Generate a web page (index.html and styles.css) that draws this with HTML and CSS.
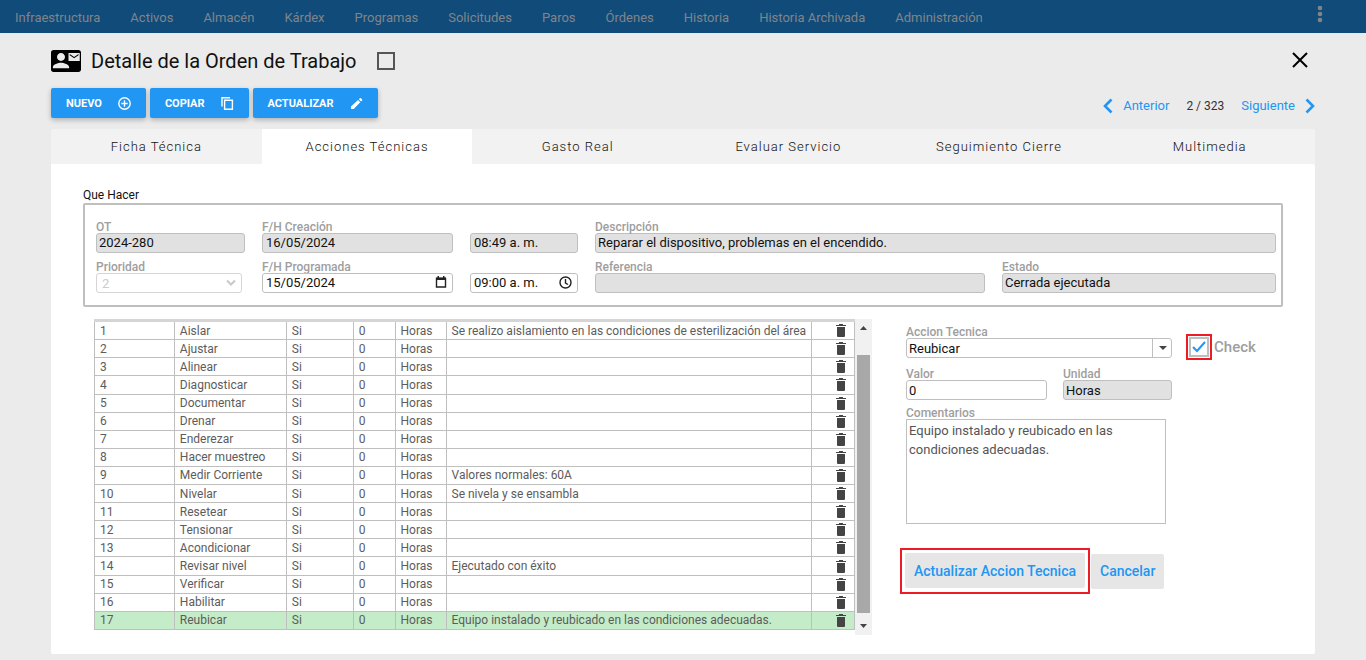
FILE: index.html
```html
<!DOCTYPE html>
<html lang="es">
<head>
    <meta charset="UTF-8">
    <meta name="viewport" content="width=device-width, initial-scale=1.0">
    <title>Detalle de la Orden de Trabajo</title>
    <link rel="stylesheet" href="styles.css">
</head>
<body>
    <svg class="sprite" aria-hidden="true">
        <symbol id="trash" viewBox="0 0 10 13">
            <path d="M0 1h3V0h4v1h3v1H0zM1 3h8v9q0 1-1 1H2q-1 0-1-1z"/>
        </symbol>
    </svg>

    <nav class="navbar">
        <a href="#">Infraestructura</a>
        <a href="#">Activos</a>
        <a href="#">Almacén</a>
        <a href="#">Kárdex</a>
        <a href="#">Programas</a>
        <a href="#">Solicitudes</a>
        <a href="#">Paros</a>
        <a href="#">Órdenes</a>
        <a href="#">Historia</a>
        <a href="#">Historia Archivada</a>
        <a href="#">Administración</a>
        <button class="menu" aria-label="Menú">
            <svg width="6" height="18" viewBox="0 0 6 18"><circle cx="3" cy="3" r="2.3"/><circle cx="3" cy="9" r="2.3"/><circle cx="3" cy="15" r="2.3"/></svg>
        </button>
    </nav>

    <main class="page">
        <header class="header">
            <svg width="30" height="22" viewBox="0 3 24 18" preserveAspectRatio="none"><path d="M22 3H2C.9 3 0 3.9 0 5v14c0 1.100.9 2 2 2h20c1.100 0 2-.9 2-2V5c0-1.100-.9-2-2-2zM8 5.500c1.800 0 3.200 1.500 3.200 3.300S9.800 12 8 12s-3.200-1.400-3.200-3.200S6.200 5.500 8 5.500zM14.500 18h-13v-1c0-2.200 4.300-3.600 6.500-3.600s6.500 1.400 6.500 3.600zM23 12h-9V5.500h9zM15 6.300v1l3.500 2.400L22 7.300v-1l-3.500 2.400z"/></svg>
            <h1>Detalle de la Orden de Trabajo</h1>
            <input type="checkbox" class="title-check" aria-label="Seleccionar orden">
            <button class="close" aria-label="Cerrar">
                <svg width="18" height="18" viewBox="0 0 18 18"><path d="M2 2l14 14M16 2L2 16"/></svg>
            </button>
        </header>

        <div class="toolbar">
            <button class="btn">NUEVO
                <svg width="13" height="13" viewBox="0 0 13 13"><circle cx="6.5" cy="6.5" r="5.7"/><path d="M6.5 3.3v6.4M3.3 6.5h6.4"/></svg>
            </button>
            <button class="btn">COPIAR
                <svg width="13" height="13" viewBox="0 0 13 13"><path d="M1 9.5V.8h8M3.6 3.2h7.8v9H3.6z"/></svg>
            </button>
            <button class="btn">ACTUALIZAR
                <svg width="13" height="13" viewBox="0 0 13 13"><path class="solid" d="M1 9.600L8 3l2.300 2.300L3.700 12H1zM8.800 2.300l1.100-1q.5-.5 1 0l1.200 1.200q.5.5 0 1l-1 1.100z"/></svg>
            </button>
            <div class="pager">
                <a href="#" class="prev">
                    <svg width="10" height="16" viewBox="0 0 10 16"><path d="M8.500 1.500L2 8l6.500 6.500"/></svg>
                    Anterior
                </a>
                <span>2 / 323</span>
                <a href="#" class="next">
                    Siguiente
                    <svg width="10" height="16" viewBox="0 0 10 16"><path d="M1.500 1.500L8 8l-6.500 6.500"/></svg>
                </a>
            </div>
        </div>

        <div class="tabs">
            <button>Ficha Técnica</button>
            <button class="active">Acciones Técnicas</button>
            <button>Gasto Real</button>
            <button>Evaluar Servicio</button>
            <button>Seguimiento Cierre</button>
            <button>Multimedia</button>
        </div>

        <section class="panel">
            <h2>Que Hacer</h2>
            <div class="order">
                <div class="field">
                    <label for="ot">OT</label>
                    <input id="ot" type="text" value="2024-280" readonly>
                </div>
                <div class="field">
                    <label for="creada">F/H Creación</label>
                    <input id="creada" class="wide-pad" type="text" value="16/05/2024" readonly>
                </div>
                <div class="field">
                    <input class="wide-pad" type="text" value="08:49 a. m." aria-label="Hora de creación" readonly>
                </div>
                <div class="field span2">
                    <label for="desc">Descripción</label>
                    <input id="desc" type="text" value="Reparar el dispositivo, problemas en el encendido." readonly>
                </div>
                <div class="field">
                    <label for="prioridad">Prioridad</label>
                    <div class="control priority">
                        <select id="prioridad" disabled><option>2</option></select>
                        <svg class="icon" width="10" height="8" viewBox="0 0 10 8"><path d="M1 1.500l4 4 4-4"/></svg>
                    </div>
                </div>
                <div class="field">
                    <label for="programada">F/H Programada</label>
                    <div class="control">
                        <input id="programada" class="wide-pad" type="text" value="15/05/2024">
                        <svg class="icon dark" width="12" height="12" viewBox="0 0 12 12"><path d="M1.500 2.500h9v8.500h-9z"/><path class="solid" d="M1 1.500h10V4H1zM2.500 0H4v2H2.500zM8 0h1.500v2H8z"/></svg>
                    </div>
                </div>
                <div class="field">
                    <div class="control">
                        <input class="wide-pad" type="text" value="09:00 a. m." aria-label="Hora programada">
                        <svg class="icon dark" width="13" height="13" viewBox="0 0 13 13"><circle cx="6.500" cy="6.500" r="5.500"/><path d="M6.500 3v4L9 8.500"/></svg>
                    </div>
                </div>
                <div class="field">
                    <label for="ref">Referencia</label>
                    <input id="ref" type="text" value="" readonly>
                </div>
                <div class="field">
                    <label for="estado">Estado</label>
                    <input id="estado" type="text" value="Cerrada ejecutada" readonly>
                </div>
            </div>

            <div class="content">
                <div class="grid-box">
                    <table class="actions">
                        <colgroup>
                            <col class="c-num"><col class="c-name"><col class="c-si"><col class="c-val"><col class="c-unit"><col><col class="c-del">
                        </colgroup>
                        <tbody>
                            <tr><td>1</td><td>Aislar</td><td>Si</td><td>0</td><td>Horas</td><td>Se realizo aislamiento en las condiciones de esterilización del área</td><td><button aria-label="Eliminar"><svg><use href="#trash"/></svg></button></td></tr>
                            <tr><td>2</td><td>Ajustar</td><td>Si</td><td>0</td><td>Horas</td><td></td><td><button aria-label="Eliminar"><svg><use href="#trash"/></svg></button></td></tr>
                            <tr><td>3</td><td>Alinear</td><td>Si</td><td>0</td><td>Horas</td><td></td><td><button aria-label="Eliminar"><svg><use href="#trash"/></svg></button></td></tr>
                            <tr><td>4</td><td>Diagnosticar</td><td>Si</td><td>0</td><td>Horas</td><td></td><td><button aria-label="Eliminar"><svg><use href="#trash"/></svg></button></td></tr>
                            <tr><td>5</td><td>Documentar</td><td>Si</td><td>0</td><td>Horas</td><td></td><td><button aria-label="Eliminar"><svg><use href="#trash"/></svg></button></td></tr>
                            <tr><td>6</td><td>Drenar</td><td>Si</td><td>0</td><td>Horas</td><td></td><td><button aria-label="Eliminar"><svg><use href="#trash"/></svg></button></td></tr>
                            <tr><td>7</td><td>Enderezar</td><td>Si</td><td>0</td><td>Horas</td><td></td><td><button aria-label="Eliminar"><svg><use href="#trash"/></svg></button></td></tr>
                            <tr><td>8</td><td>Hacer muestreo</td><td>Si</td><td>0</td><td>Horas</td><td></td><td><button aria-label="Eliminar"><svg><use href="#trash"/></svg></button></td></tr>
                            <tr><td>9</td><td>Medir Corriente</td><td>Si</td><td>0</td><td>Horas</td><td>Valores normales: 60A</td><td><button aria-label="Eliminar"><svg><use href="#trash"/></svg></button></td></tr>
                            <tr><td>10</td><td>Nivelar</td><td>Si</td><td>0</td><td>Horas</td><td>Se nivela y se ensambla</td><td><button aria-label="Eliminar"><svg><use href="#trash"/></svg></button></td></tr>
                            <tr><td>11</td><td>Resetear</td><td>Si</td><td>0</td><td>Horas</td><td></td><td><button aria-label="Eliminar"><svg><use href="#trash"/></svg></button></td></tr>
                            <tr><td>12</td><td>Tensionar</td><td>Si</td><td>0</td><td>Horas</td><td></td><td><button aria-label="Eliminar"><svg><use href="#trash"/></svg></button></td></tr>
                            <tr><td>13</td><td>Acondicionar</td><td>Si</td><td>0</td><td>Horas</td><td></td><td><button aria-label="Eliminar"><svg><use href="#trash"/></svg></button></td></tr>
                            <tr><td>14</td><td>Revisar nivel</td><td>Si</td><td>0</td><td>Horas</td><td>Ejecutado con éxito</td><td><button aria-label="Eliminar"><svg><use href="#trash"/></svg></button></td></tr>
                            <tr><td>15</td><td>Verificar</td><td>Si</td><td>0</td><td>Horas</td><td></td><td><button aria-label="Eliminar"><svg><use href="#trash"/></svg></button></td></tr>
                            <tr><td>16</td><td>Habilitar</td><td>Si</td><td>0</td><td>Horas</td><td></td><td><button aria-label="Eliminar"><svg><use href="#trash"/></svg></button></td></tr>
                            <tr class="selected"><td>17</td><td>Reubicar</td><td>Si</td><td>0</td><td>Horas</td><td>Equipo instalado y reubicado en las condiciones adecuadas.</td><td><button aria-label="Eliminar"><svg><use href="#trash"/></svg></button></td></tr>
                        </tbody>
                    </table>
                    <div class="scrollbar">
                        <svg width="7" height="4" viewBox="0 0 7 4"><path d="M0 4l3.500-4L7 4z"/></svg>
                        <div class="thumb"></div>
                        <svg width="7" height="4" viewBox="0 0 7 4"><path d="M0 0l3.500 4L7 0z"/></svg>
                    </div>
                </div>

                <form class="action-form">
                    <div class="row">
                        <div class="field action">
                            <label for="accion">Accion Tecnica</label>
                            <div class="control combo">
                                <select id="accion"><option>Reubicar</option></select>
                                <span class="arrow"><svg width="8" height="4" viewBox="0 0 8 4"><path d="M0 0h8L4 4z"/></svg></span>
                            </div>
                        </div>
                        <div class="check">
                            <span class="mark"><input id="check" type="checkbox" checked></span>
                            <label for="check">Check</label>
                        </div>
                    </div>
                    <div class="row">
                        <div class="field value">
                            <label for="valor">Valor</label>
                            <input id="valor" type="text" value="0">
                        </div>
                        <div class="field unit">
                            <label for="unidad">Unidad</label>
                            <input id="unidad" type="text" value="Horas" readonly>
                        </div>
                    </div>
                    <div class="field comments">
                        <label for="comentarios">Comentarios</label>
                        <textarea id="comentarios">Equipo instalado y reubicado en las condiciones adecuadas.</textarea>
                    </div>
                    <div class="buttons">
                        <span class="mark"><button type="button">Actualizar Accion Tecnica</button></span>
                        <button type="button">Cancelar</button>
                    </div>
                </form>
            </div>
        </section>
    </main>
</body>
</html>
```
FILE: styles.css
```css
* {
    box-sizing: border-box;
}

body {
    margin: 0;
    background-color: #ebebeb;
    font-family: Roboto, "Liberation Sans", sans-serif;
    color: #111;
}

button, input, select, textarea {
    font-family: inherit;
    margin: 0;
}

button {
    border: none;
    background: none;
    padding: 0;
    cursor: pointer;
}

a {
    text-decoration: none;
}

svg {
    display: block;
}

.sprite {
    display: none;
}

/* top menu */
.navbar {
    display: flex;
    align-items: center;
    gap: 30px;
    height: 33px;
    padding: 2px 43px 0 15px;
    background-color: #114b79;
}

.navbar a {
    color: #808589;
    font-size: 13px;
    font-weight: 400;
}

.navbar .menu {
    margin-left: auto;
    padding-bottom: 8px;
}

.navbar .menu svg {
    fill: #808589;
}

/* header */
.page {
    padding: 16px 51px 6px;
}

.header {
    display: flex;
    align-items: center;
    height: 24px;
}

.header h1 {
    margin: 0 21px 0 10px;
    font-size: 20px;
    font-weight: 400;
}

.title-check {
    appearance: none;
    width: 18px;
    height: 18px;
    border: 2px solid #555;
}

.close {
    margin: 0 6px 2px auto;
}

.close svg {
    fill: none;
    stroke: #000;
    stroke-width: 2;
}

.toolbar {
    display: flex;
    align-items: center;
    gap: 4px;
    margin: 15px 0 11px;
}

.btn {
    display: flex;
    align-items: center;
    gap: 16px;
    height: 30px;
    padding: 0 15px;
    border-radius: 2px;
    background-color: #2196f3;
    color: #fff;
    font-size: 11px;
    font-weight: 700;
    box-shadow: 0 2px 5px rgba(0, 0, 0, 0.25);
}

.btn svg {
    fill: none;
    stroke: #fff;
    stroke-width: 1.4;
}

.btn .solid {
    fill: #fff;
    stroke: none;
}

.pager {
    display: flex;
    align-items: center;
    gap: 17px;
    margin-left: auto;
    padding-top: 5px;
    color: #333;
    font-size: 12px;
}

.pager a {
    display: flex;
    align-items: center;
    gap: 10px;
    color: #2196f3;
    font-size: 13px;
}

.pager svg {
    fill: none;
    stroke: #2196f3;
    stroke-width: 2.6;
}

/* tabs */
.tabs {
    display: flex;
    background-color: #f2f2f2;
    border-radius: 2px 2px 0 0;
}

.tabs button {
    flex: 1 1 0;
    height: 35px;
    color: #111;
    font-size: 13px;
    font-weight: 300;
    letter-spacing: 1px;
}

.tabs .active {
    background-color: #fff;
}

.panel {
    padding: 24px 32px 19px;
    background-color: #fff;
    border-radius: 0 2px 2px 2px;
}

.panel h2 {
    margin: 0;
    font-size: 12px;
    font-weight: 400;
    line-height: 15px;
}

/* fields */
.order {
    display: grid;
    grid-template-columns: 149px 191px 108px 390fr 274fr;
    gap: 7px 17px;
    align-items: end;
    padding: 15px 5px 12px 11px;
    border: 2px solid #bfbfbf;
    border-radius: 2px;
}

.span2 {
    grid-column: span 2;
}

.field label {
    display: block;
    padding-top: 2px;
    color: #9e9e9e;
    font-size: 12px;
    font-weight: 500;
    line-height: 11px;
}

.field input,
.field select {
    display: block;
    width: 100%;
    height: 20px;
    padding: 0 2px;
    border: 1px solid #bfbfbf;
    border-radius: 3px;
    background-color: #fff;
    color: #111;
    font-size: 13px;
}

.field input[readonly] {
    background-color: #e1e1e1;
}

.order .field input {
    padding-bottom: 2px;
}

.field .wide-pad {
    padding: 0 3px;
}

.field select {
    appearance: none;
}

.control {
    position: relative;
}

.control .icon {
    position: absolute;
    right: 6px;
    top: 3px;
    fill: none;
    stroke: #c8c8c8;
    stroke-width: 2;
    pointer-events: none;
}

.control .dark {
    stroke: #222;
    stroke-width: 1.4;
}

.control .solid {
    fill: #222;
    stroke: none;
}

.priority {
    width: 146px;
}

.priority select {
    padding: 0 5px;
    border-color: #d5d5d5;
    color: #ccc;
    opacity: 1;
}

.priority .icon {
    top: 6px;
}

/* actions grid */
.content {
    display: flex;
    justify-content: space-between;
    padding: 12px 26px 0 11px;
}

.grid-box {
    display: flex;
    align-items: flex-start;
    width: 778px;
}

.actions {
    flex: 1;
    height: 311px;
    border-collapse: collapse;
    table-layout: fixed;
    border-top: 3px solid #d5d5d5;
    color: #5c5c5c;
    font-size: 12px;
}

.c-num { width: 80px; }
.c-name { width: 112px; }
.c-si { width: 67px; }
.c-val { width: 42px; }
.c-unit { width: 51px; }
.c-del { width: 43px; }

.actions td {
    padding: 0 5px;
    border: 1px solid #bfbfbf;
    line-height: 16px;
    white-space: nowrap;
}

.actions tr:first-child td {
    border-top: none;
}

.actions button {
    display: block;
    margin-left: auto;
    padding-right: 3px;
}

.actions svg {
    width: 10px;
    height: 13px;
    fill: #444;
}

.selected {
    background-color: #c5ecc8;
}

.scrollbar {
    display: flex;
    flex-direction: column;
    align-items: center;
    gap: 25px;
    width: 17px;
    height: 316px;
    padding: 7px 2px;
    background-color: #f1f1f1;
}

.scrollbar svg {
    fill: #444;
}

.thumb {
    flex: 1;
    width: 13px;
    margin-bottom: -14px;
    background-color: #a8a8a8;
}

/* action form */
.action-form {
    display: flex;
    flex-direction: column;
    width: 351px;
    padding-top: 6px;
}

.row {
    display: flex;
    gap: 16px;
    margin-bottom: 9px;
}

.action {
    width: 266px;
}

.combo .arrow {
    position: absolute;
    top: 0;
    right: 0;
    display: flex;
    align-items: center;
    justify-content: center;
    width: 20px;
    height: 20px;
    border-left: 1px solid #bfbfbf;
    pointer-events: none;
}

.combo svg {
    fill: #444;
}

.check {
    display: flex;
    align-items: center;
    gap: 2px;
    margin-left: -2px;
    padding-top: 10px;
    height: 33px;
}

.check label {
    color: #9e9e9e;
    font-size: 15px;
    font-weight: 500;
}

.check .mark {
    padding: 1px;
}

.check input {
    appearance: none;
    display: block;
    width: 20px;
    height: 20px;
    border: 2px solid #bfbfbf;
    background: url("data:image/svg+xml,%3Csvg xmlns='http://www.w3.org/2000/svg' viewBox='0 0 16 16'%3E%3Cpath d='M2 8l4 4 8-9' fill='none' stroke='%232196f3' stroke-width='2'/%3E%3C/svg%3E") center / 16px no-repeat;
}

.mark {
    border: 2px solid #ed1c24;
}

.value {
    width: 141px;
}

.unit {
    width: 109px;
}

.comments {
    width: 260px;
    margin-top: -3px;
}

.comments textarea {
    display: block;
    width: 100%;
    height: 105px;
    padding: 1px 2px;
    border: 1px solid #bfbfbf;
    color: #555;
    font-size: 13px;
    line-height: 19px;
    resize: none;
}

.buttons {
    display: flex;
    align-items: center;
    gap: 1px;
    margin: 24px 0 0 -6px;
}

.buttons .mark {
    padding: 3px 3px 4px;
}

.buttons button {
    display: block;
    height: 35px;
    padding: 0 9px;
    border-radius: 2px;
    background-color: #e6e6e6;
    color: #2196f3;
    font-size: 14px;
    font-weight: 500;
}
```
